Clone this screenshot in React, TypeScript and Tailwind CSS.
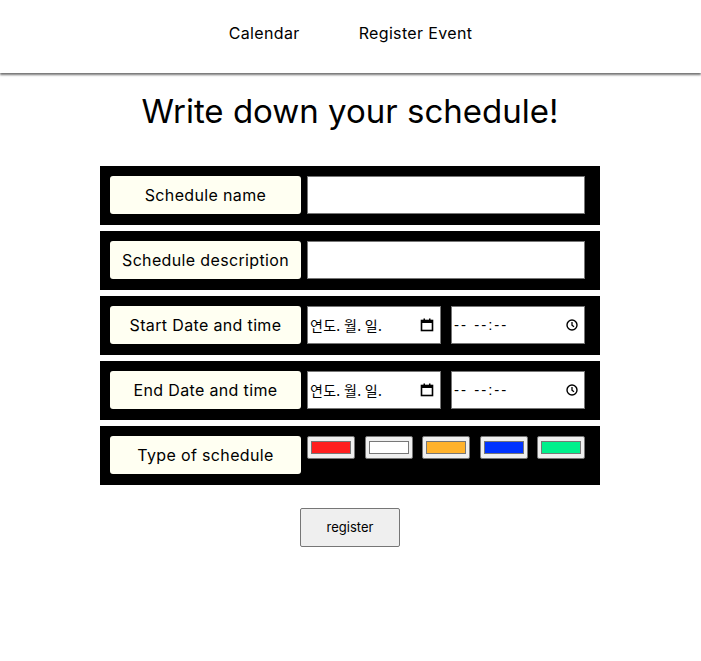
import { useState } from "react";

const swatches = ["#ff1f1f", "#ffffff", "#ffb22b", "#0033ff", "#00f08c"];

function Label({ children }: { children: React.ReactNode }) {
  return (
    <div className="w-[191px] h-[38px] shrink-0 bg-[#fffff2] rounded-[3px] flex items-center justify-center text-[16px] tracking-[0.35px] text-black">
      {children}
    </div>
  );
}

function CalendarIcon() {
  return (
    <svg width="14" height="14" viewBox="0 0 14 14" className="shrink-0">
      <rect x="1.5" y="2.5" width="11" height="10" fill="none" stroke="#000" strokeWidth="1.6" />
      <rect x="1.5" y="2.5" width="11" height="2.5" fill="#000" />
      <rect x="3.5" y="0.5" width="1.5" height="3" fill="#000" />
      <rect x="9" y="0.5" width="1.5" height="3" fill="#000" />
    </svg>
  );
}

function ClockIcon() {
  return (
    <svg width="12" height="12" viewBox="0 0 12 12" className="shrink-0">
      <circle cx="6" cy="6" r="5" fill="none" stroke="#000" strokeWidth="1.4" />
      <path d="M6 3v3.2l2 1.6" fill="none" stroke="#000" strokeWidth="1.3" />
    </svg>
  );
}

function DateBox() {
  return (
    <div className="w-[134px] h-[38px] bg-white border border-[#767676] flex items-center justify-between pl-[2px] pr-[6px]">
      <span className="text-[14px] tracking-[0.3px] font-['Noto_Sans_CJK_KR',sans-serif] text-black">연도. 월. 일.</span>
      <CalendarIcon />
    </div>
  );
}

function TimeBox() {
  return (
    <div className="w-[134px] h-[38px] bg-white border border-[#767676] flex items-center justify-between pl-[2px] pr-[6px]">
      <span className="text-[15px] font-['Liberation_Sans',sans-serif] text-black tracking-[2px]">-- --:--</span>
      <ClockIcon />
    </div>
  );
}

function Row({ children }: { children: React.ReactNode }) {
  return (
    <div className="w-[500px] h-[59px] bg-black flex items-start gap-[6px] pl-[10px] pr-[15px] pt-[10px]">
      {children}
    </div>
  );
}

export default function App() {
  const [name, setName] = useState("");
  const [desc, setDesc] = useState("");

  return (
    <div className="min-h-[661px] bg-white font-['Inter',sans-serif] text-black">
      <header className="h-[73px] flex items-center justify-center gap-[59px] shadow-[0_2px_2px_rgba(0,0,0,0.55)] text-[16px] tracking-[0.35px] pb-[8px]">
        <a className="cursor-pointer">Calendar</a>
        <a className="cursor-pointer">Register Event</a>
      </header>

      <h1 className="text-center text-[33px] mt-[18px] leading-[40px] pr-[1px]">Write down your schedule!</h1>

      <div className="flex flex-col items-center gap-[6px] mt-[35px] pr-[1px]">
        <Row>
          <Label>Schedule name</Label>
          <input
            value={name}
            onChange={(e) => setName(e.target.value)}
            className="w-[278px] h-[38px] bg-white border border-[#767676] outline-none px-1"
          />
        </Row>
        <Row>
          <Label>Schedule description</Label>
          <input
            value={desc}
            onChange={(e) => setDesc(e.target.value)}
            className="w-[278px] h-[38px] bg-white border border-[#767676] outline-none px-1"
          />
        </Row>
        <Row>
          <Label>Start Date and time</Label>
          <div className="flex gap-[10px]">
            <DateBox />
            <TimeBox />
          </div>
        </Row>
        <Row>
          <Label>End Date and time</Label>
          <div className="flex gap-[10px]">
            <DateBox />
            <TimeBox />
          </div>
        </Row>
        <Row>
          <Label>Type of schedule</Label>
          <div className="flex gap-[9.5px]">
            {swatches.map((c) => (
              <div
                key={c}
                className="w-[48px] h-[23px] bg-[#efefef] border border-[#767676] rounded-[2px] px-[3px] py-[4px]"
              >
                <div className="w-full h-full border border-[#777]" style={{ backgroundColor: c }} />
              </div>
            ))}
          </div>
        </Row>
      </div>

      <div className="flex justify-center mt-[23px] pr-[1px]">
        <button className="w-[100px] h-[39px] bg-[#efefef] border border-[#767676] rounded-[2px] text-[13px]">
          register
        </button>
      </div>
    </div>
  );
}
